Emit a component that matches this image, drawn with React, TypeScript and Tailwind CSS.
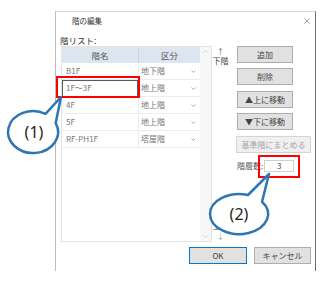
import { X } from 'lucide-react';

const rows = [
  { name: 'B1F', kind: '地下階' },
  { name: '1F～3F', kind: '地上階', editing: true },
  { name: '4F', kind: '地上階' },
  { name: '5F', kind: '地上階' },
  { name: 'RF-PH1F', kind: '塔屋階' },
];

const Chevron = () => (
  <svg width="5" height="3" viewBox="0 0 5 3" className="mr-[4px]">
    <path d="M0.5 0.5 L2.5 2.5 L4.5 0.5" fill="none" stroke="#9a9a9a" strokeWidth="0.8" />
  </svg>
);

const Btn = ({ label, wide }: { label: string; wide?: boolean }) => (
  <div
    className={`flex h-[17px] items-center justify-center border text-[8px] ${
      wide
        ? 'w-[75px] border-[#d4d4d4] bg-[#f0f0f0] text-[#a5a5a5]'
        : 'ml-[1px] w-[56px] border-[#adadad] bg-[#e1e1e1] text-[#444]'
    }`}
  >
    {label}
  </div>
);

const Callouts = () => (
  <svg className="pointer-events-none absolute left-0 top-0" width="329" height="282">
    <path
      d="M45.5 113.8 L61 97 L55.7 123.1 A25 21 0 1 1 45.5 113.8 Z"
      fill="white"
      stroke="#2e75b6"
      strokeWidth="2.5"
      strokeLinejoin="round"
    />
    <text x="34" y="138" textAnchor="middle" fontSize="16" fill="#1f1f1f" fontFamily="'Noto Sans', sans-serif">
      (1)
    </text>
    <path
      d="M248 195 L269 174 L262 201.8 A29 20 0 1 1 248 195 Z"
      fill="white"
      stroke="#2e75b6"
      strokeWidth="2.5"
      strokeLinejoin="round"
    />
    <text x="239" y="220" textAnchor="middle" fontSize="16" fill="#1f1f1f" fontFamily="'Noto Sans', sans-serif">
      (2)
    </text>
  </svg>
);

export default function App() {
  return (
    <div
      className="relative h-[282px] w-[329px] overflow-hidden bg-white"
      style={{ fontFamily: "'Noto Sans CJK JP', 'Noto Sans', sans-serif" }}
    >
      <div className="ml-[55px] mt-[11px] flex h-[260px] w-[261px] flex-col border-l border-r border-t border-l-[#bdbdbd] border-r-[#6e6e6e] border-t-[#d6d6d6]">
        {/* title bar */}
        <div className="flex h-[17px] items-center justify-between pl-[16px] pr-[3px]">
          <span className="text-[7.5px] leading-none text-[#333]">階の編集</span>
          <X size={10} strokeWidth={1} color="#333" />
        </div>

        <div className="mt-[5px] pl-[4px] text-[8.5px] leading-[12px] text-[#333]">階リスト:</div>

        <div className="flex pl-[5px]">
          {/* table */}
          <div className="flex h-[196px] w-[151px] border border-[#e3e3e3] bg-white">
            <div className="flex w-[138px] flex-col">
              <div className="flex h-[16px] bg-[#dce6f0] text-[8.5px] text-[#555]">
                <div className="flex w-[77px] items-center justify-center border-r border-[#c9d6e4]">階名</div>
                <div className="flex flex-1 items-center justify-center">区分</div>
              </div>
              {rows.map((r) => (
                <div key={r.name} className="flex h-[17px] border-b border-[#ececec] text-[8px] text-[#777]">
                  <div className="flex w-[77px] items-center border-r border-[#ececec]">
                    {r.editing ? (
                      <div className="flex h-[17px] w-[76px] items-center border border-[#5a5a5a] pl-[3px]">{r.name}</div>
                    ) : (
                      <span className="pl-[4px]">{r.name}</span>
                    )}
                  </div>
                  <div className="flex flex-1 items-center justify-between pl-[2px]">
                    <span>{r.kind}</span>
                    <Chevron />
                  </div>
                </div>
              ))}
            </div>
            {/* scrollbar */}
            <div className="flex w-[11px] flex-col items-center justify-between bg-[#f7f7f7] py-[3px]">
              <svg width="5" height="3" viewBox="0 0 5 3">
                <path d="M0.5 2.5 L2.5 0.5 L4.5 2.5" fill="none" stroke="#c4c4c4" strokeWidth="0.8" />
              </svg>
              <svg width="5" height="3" viewBox="0 0 5 3">
                <path d="M0.5 0.5 L2.5 2.5 L4.5 0.5" fill="none" stroke="#c4c4c4" strokeWidth="0.8" />
              </svg>
            </div>
          </div>

          {/* direction hints */}
          <div className="flex w-[24px] flex-col justify-between text-[8px] leading-[10px] text-[#444]">
            <div className="flex w-[17px] flex-col items-center">
              <span className="text-[7px]">↑</span>
              <span>下階</span>
            </div>
            <div className="flex w-[17px] flex-col items-center pb-[1px]">
              <span>上階</span>
              <span className="text-[7px] text-[#999]">↓</span>
            </div>
          </div>

          {/* buttons */}
          <div className="flex flex-col">
            <Btn label="追加" />
            <div className="mt-[5px]">
              <Btn label="削除" />
            </div>
            <div className="mt-[6px]">
              <Btn label="▲上に移動" />
            </div>
            <div className="mt-[5px]">
              <Btn label="▼下に移動" />
            </div>
            <div className="mt-[6px]">
              <Btn label="基準階にまとめる" wide />
            </div>
            <div className="ml-[1px] mt-[7px] flex items-center">
              <span className="text-[8px] text-[#555]">階層数:</span>
              <div className="ml-[1px] flex h-[12px] w-[30px] items-center justify-center border border-[#d0d0d0] text-[8px] text-[#3a4a6a]">
                3
              </div>
            </div>
          </div>
        </div>

        {/* footer */}
        <div className="mt-[5px] flex justify-end gap-[7px] pr-[4px]">
          <div className="flex h-[17px] w-[58px] items-center justify-center border border-[#0078d7] bg-[#e1e1e1] text-[8px] text-[#444]">
            OK
          </div>
          <div className="flex h-[17px] w-[57px] items-center justify-center border border-[#adadad] bg-[#e1e1e1] text-[8px] text-[#444]">
            キャンセル
          </div>
        </div>
      </div>

      {/* highlight boxes */}
      <div className="pointer-events-none absolute left-[56px] top-[76px] h-[22px] w-[84px] border-2 border-[#ff0000]" />
      <div className="pointer-events-none absolute left-[258px] top-[155px] h-[23px] w-[42px] border-[2.5px] border-[#ff0000]" />

      <Callouts />
    </div>
  );
}
